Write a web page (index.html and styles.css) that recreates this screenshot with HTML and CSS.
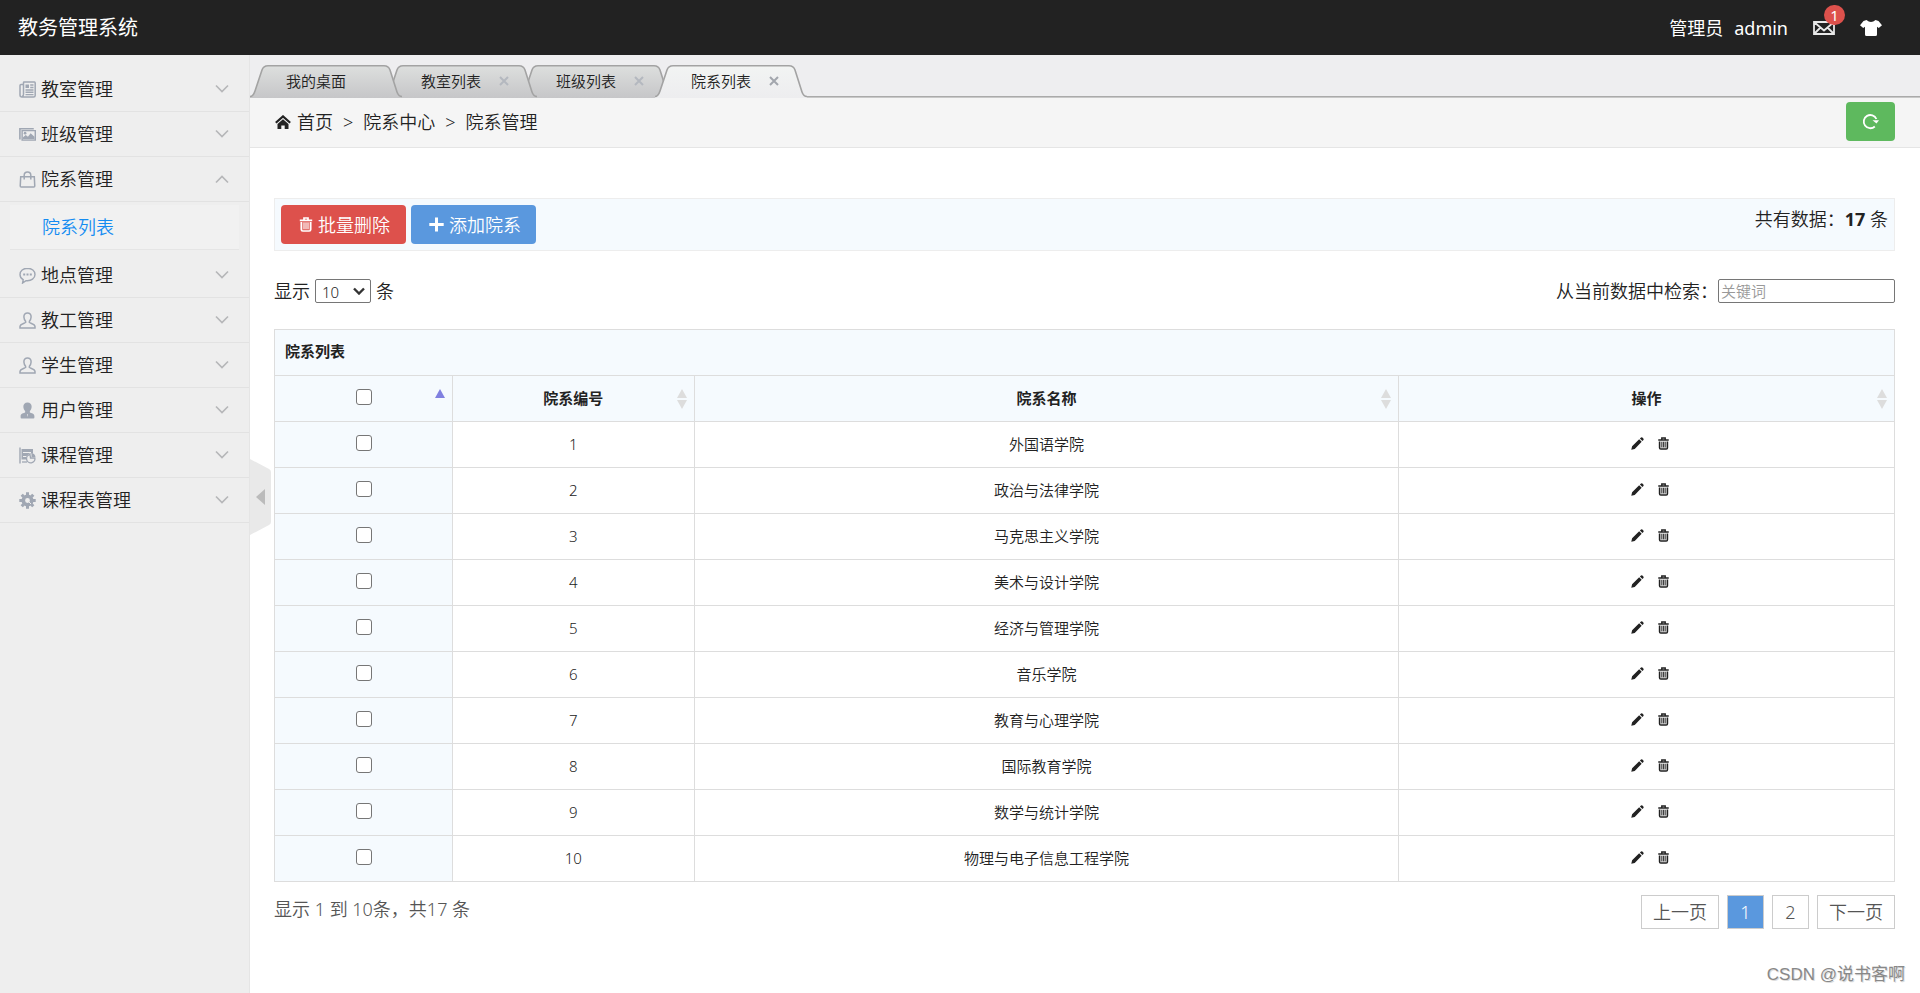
FILE: index.html
```html
<!DOCTYPE html>
<html lang="zh-CN">
<head>
<meta charset="utf-8">
<title>教务管理系统</title>
<link rel="stylesheet" href="styles.css">
</head>
<body>
<svg class="defs" aria-hidden="true">
  <defs>
    <linearGradient id="g-tab" x1="0" y1="0" x2="0" y2="1"><stop offset="0" stop-color="#dddfde"/><stop offset="1" stop-color="#c6c6c8"/></linearGradient>
    <linearGradient id="g-tab-on" x1="0" y1="0" x2="0" y2="1"><stop offset="0" stop-color="#f2f4f3"/><stop offset="1" stop-color="#ededef"/></linearGradient>
    <symbol id="tab-shape" viewBox="0 0 152 33"><path d="M0 31.5C3 31.5 4 29 5 26L12 5C13 2 15 .8 18 .8H134C137 .8 139 2 140 5L147 27C148 30 149 31.5 152 31.5V33H0Z"/></symbol>
    <symbol id="tab-line" viewBox="0 0 152 33"><path d="M0 31.5C3 31.5 4 29 5 26L12 5C13 2 15 .8 18 .8H134C137 .8 139 2 140 5L147 27C148 30 149 31.5 152 31.5" fill="none" stroke-width="1.6"/></symbol>
    <symbol id="i-news" viewBox="0 0 17 17"><path d="M4.500 3V1.500Q4.500 1 5 1H15.500Q16.200 1 16.200 2V14.500Q16.200 16 14.500 16H3Q1 16 1 14V4.500Q1 3.500 2 3.500H4.500V13.500Q4.500 15 3 15.500" fill="none" stroke="currentColor" stroke-width="1.500"/><path d="M6.500 3.500h3.500v3.500h-3.500z" fill="currentColor"/><path d="M11.200 4h3.300M11.200 6.500h3.300M6.500 9h8M6.500 11.300h8M6.500 13.600h8" fill="none" stroke="currentColor" stroke-width="1.400"/></symbol>
    <symbol id="i-pics" viewBox="0 0 19 15"><path d="M1 13V1H16.500" fill="none" stroke="currentColor" stroke-width="1.800"/><path d="M3.500 3.200H18.200V13.800H3.500Z" fill="none" stroke="currentColor" stroke-width="1.600"/><path d="M4.500 12.800V10.500L7.500 8L10 10L13 6L17.300 10V12.800Z" fill="currentColor"/><circle cx="6.800" cy="6" r="1.500" fill="currentColor"/></symbol>
    <symbol id="i-bag" viewBox="0 0 17 18"><path d="M1.300 6H15.700L16.200 16Q16.200 17 15.200 17H1.800Q.8 17 .8 16ZM5 9V4.500Q5 1 8.500 1T12 4.500V9" fill="none" stroke="currentColor" stroke-width="1.600"/></symbol>
    <symbol id="i-chat" viewBox="0 0 17 17"><path d="M8.500 1.200C4.200 1.200 1 4 1 7.400C1 9.700 2.200 11.600 4.200 12.700L3.600 16L7 13.600C12.500 14.200 16 11.200 16 7.400C16 4 12.800 1.200 8.500 1.200Z" fill="none" stroke="currentColor" stroke-width="1.400"/><path d="M4.200 6.500h2v2h-2zM7.500 6.500h2v2h-2zM10.800 6.500h2v2h-2z" fill="currentColor"/></symbol>
    <symbol id="i-person" viewBox="0 0 17 17"><path d="M8.500 1C6.300 1 4.800 2.500 4.900 5C5 7 5.700 8.200 6.600 9.200V10.500C5.500 11.300 1 12 1 14.500V16H16V14.500C16 12 11.500 11.300 10.400 10.500V9.200C11.300 8.200 12 7 12.100 5C12.200 2.500 10.700 1 8.500 1Z" fill="none" stroke="currentColor" stroke-width="1.500"/></symbol>
    <symbol id="i-user" viewBox="0 0 17 18"><path d="M8.500.5C5.800.5 4 2.300 4.100 5C4.200 7 5 8.500 6 9.500V11C4.500 11.600 1.200 12 1.200 15V16.500Q1.200 17.500 2.200 17.500H14.800Q15.800 17.500 15.800 16.500V15C15.800 12 12.500 11.600 11 11V9.500C12 8.500 12.800 7 12.900 5C13 2.300 11.200.5 8.500.5Z" fill="currentColor"/><path d="M8 13h1l-.5 3z" fill="#eee"/></symbol>
    <symbol id="i-plan" viewBox="0 0 17 17"><path d="M1 .5V16.500" stroke="currentColor" stroke-width="1.400"/><path d="M2.500 2H14V6.500H10.500L7 9.500V12.500H2.500Z" fill="currentColor"/><path d="M4 5.500h8M4 9.500h3" stroke="#eee"/><path d="M11 7.500A4.200 4.200 0 1 0 15.900 11H11.500Z" fill="none" stroke="currentColor" stroke-width="1.300"/><path d="M12.500 6V10H16.500Q16 6.500 12.500 6" fill="currentColor"/><path d="M3 15h5" stroke="currentColor" stroke-width="1.300"/></symbol>
    <symbol id="i-gear" viewBox="0 0 17 17"><g fill="none" stroke="currentColor"><circle cx="8.500" cy="8.500" r="4.200" stroke-width="3.600"/><path d="M8.500 .3V3M8.500 14V16.700M.3 8.500H3M14 8.500H16.700M2.700 2.700L4.600 4.600M12.400 12.400L14.300 14.300M14.300 2.700L12.400 4.600M4.600 12.400L2.700 14.300" stroke-width="3"/><path d="M8 8l4 4" stroke="#eee" stroke-width="1"/></g></symbol>
    <symbol id="i-down" viewBox="0 0 14 10"><path d="M1 1.500L7 7.500L13 1.500" fill="none" stroke="currentColor" stroke-width="1.700"/></symbol>
    <symbol id="i-up" viewBox="0 0 14 10"><path d="M1 8.500L7 2.500L13 8.500" fill="none" stroke="currentColor" stroke-width="1.700"/></symbol>
    <symbol id="i-close" viewBox="0 0 10 10"><path d="M1 1L9 9M9 1L1 9" fill="none" stroke="currentColor" stroke-width="2"/></symbol>
    <symbol id="i-home" viewBox="0 0 16 14"><path d="M.8 7.800L8 1.400L15.200 7.800" fill="none" stroke="currentColor" stroke-width="2.200"/><path d="M2.500 9L8 4.200L13.500 9V14H9.700V10.500H6.300V14H2.500Z" fill="currentColor"/></symbol>
    <symbol id="i-refresh" viewBox="0 0 17 17"><path d="M12.800 13.500A6.600 6.600 0 1 1 14.400 6" fill="none" stroke="currentColor" stroke-width="1.800"/><path d="M10.500 7.200H17L14.500 10.500Z" fill="currentColor"/></symbol>
    <symbol id="i-bin" viewBox="0 0 13 15"><path d="M4.500 2.500V1H8.500V2.500M.3 3.300H12.700" fill="none" stroke="currentColor" stroke-width="1.700"/><path d="M1.800 5V12.500Q1.800 14 3.300 14H9.700Q11.200 14 11.200 12.500V5" fill="none" stroke="currentColor" stroke-width="1.700"/><path d="M1.800 5H11.200V13H1.800Z" fill="currentColor" opacity=".2"/><path d="M4.500 5.500V12M6.500 5.500V12M8.500 5.500V12" stroke="currentColor"/></symbol>
    <symbol id="i-plus" viewBox="0 0 15 15"><path d="M7.500 .5V14.500M.3 7.500H14.700" stroke="currentColor" stroke-width="3"/></symbol>
    <symbol id="i-pencil" viewBox="0 0 14 14"><path d="M.3 13.700L1.200 10L8.800 2.500L11.500 5.200L4 12.800ZM9.600 1.700L10.800.6Q11.700 0 12.600.8L13.300 1.500Q14 2.300 13.400 3.200L12.300 4.400Z" fill="currentColor"/></symbol>
    <symbol id="i-mail" viewBox="0 0 22 14"><path d="M1 1H21V13H1ZM1 1L11 9.500L21 1M1 13L7.500 6.500M21 13L14.500 6.500" fill="none" stroke="currentColor" stroke-width="1.800"/></symbol>
    <symbol id="i-shirt" viewBox="0 0 22 16"><path d="M6.500 0Q11 3.800 15.500 0L18.500 1L22 5.300L18.800 8L17 6.700V14.500Q17 16 15.500 16H6.500Q5 16 5 14.500V6.700L3.200 8L0 5.300L3.500 1Z" fill="currentColor"/></symbol>
    <symbol id="i-sort" viewBox="0 0 10 20"><path d="M5 0L10 9H0ZM5 20L10 11H0Z" fill="currentColor"/></symbol>
    <symbol id="i-asc" viewBox="0 0 10 20"><path d="M5 0L10 9H0Z" fill="currentColor"/></symbol>
  </defs>
</svg>

<header class="topbar">
  <h1 class="brand">教务管理系统</h1>
  <div class="account">
    <span>管理员</span>
    <a class="user" href="#">admin</a>
    <a class="mail" href="#" aria-label="消息"><svg class="ic-wide"><use href="#i-mail"/></svg><span class="badge">1</span></a>
    <a class="skin" href="#" aria-label="换肤"><svg class="ic-shirt"><use href="#i-shirt"/></svg></a>
  </div>
</header>

<div class="shell">
  <nav class="side">
    <button class="item"><svg class="ic"><use href="#i-news"/></svg>教室管理<svg class="chev"><use href="#i-down"/></svg></button>
    <button class="item"><svg class="ic"><use href="#i-pics"/></svg>班级管理<svg class="chev"><use href="#i-down"/></svg></button>
    <button class="item"><svg class="ic"><use href="#i-bag"/></svg>院系管理<svg class="chev"><use href="#i-up"/></svg></button>
    <div class="sub"><a href="#">院系列表</a></div>
    <button class="item"><svg class="ic"><use href="#i-chat"/></svg>地点管理<svg class="chev"><use href="#i-down"/></svg></button>
    <button class="item"><svg class="ic"><use href="#i-person"/></svg>教工管理<svg class="chev"><use href="#i-down"/></svg></button>
    <button class="item"><svg class="ic"><use href="#i-person"/></svg>学生管理<svg class="chev"><use href="#i-down"/></svg></button>
    <button class="item"><svg class="ic"><use href="#i-user"/></svg>用户管理<svg class="chev"><use href="#i-down"/></svg></button>
    <button class="item"><svg class="ic"><use href="#i-plan"/></svg>课程管理<svg class="chev"><use href="#i-down"/></svg></button>
    <button class="item"><svg class="ic"><use href="#i-gear"/></svg>课程表管理<svg class="chev"><use href="#i-down"/></svg></button>
  </nav>

  <main class="main">
    <button class="fold" aria-label="收起菜单"><svg viewBox="0 0 21 76"><path d="M0 0L19 10Q21 11 21 13V63Q21 65 19 66L0 76Z" fill="#e9e9e9"/><path d="M6 38L15 30V46Z" fill="#bbb"/></svg></button>

    <div class="tabs">
      <div class="tab t1"><svg class="shape"><use href="#tab-shape"/><use class="line" href="#tab-line"/></svg><span>我的桌面</span></div>
      <div class="tab t2"><svg class="shape"><use href="#tab-shape"/><use class="line" href="#tab-line"/></svg><span>教室列表</span><button class="x" aria-label="关闭"><svg><use href="#i-close"/></svg></button></div>
      <div class="tab t3"><svg class="shape"><use href="#tab-shape"/><use class="line" href="#tab-line"/></svg><span>班级列表</span><button class="x" aria-label="关闭"><svg><use href="#i-close"/></svg></button></div>
      <div class="tab on"><svg class="shape"><use href="#tab-shape"/><use class="line" href="#tab-line"/></svg><span>院系列表</span><button class="x" aria-label="关闭"><svg><use href="#i-close"/></svg></button></div>
    </div>

    <div class="crumbs">
      <svg class="home"><use href="#i-home"/></svg><span>首页</span><span class="gt">&gt;</span><span>院系中心</span><span class="gt">&gt;</span><span>院系管理</span>
      <button class="btn green" aria-label="刷新"><svg class="ic"><use href="#i-refresh"/></svg></button>
    </div>

    <div class="page">
      <div class="tools">
        <button class="btn red"><svg class="bin"><use href="#i-bin"/></svg>批量删除</button>
        <button class="btn blue"><svg class="plus"><use href="#i-plus"/></svg>添加院系</button>
        <span class="total">共有数据：<strong>17</strong> 条</span>
      </div>

      <div class="filters">
        <div class="show"><label for="size">显示</label><span class="pick"><select id="size"><option>10</option><option>25</option><option>50</option></select><svg viewBox="0 0 12 8"><path d="M1 1.500L6 6.500L11 1.500" fill="none" stroke="#333" stroke-width="2.400"/></svg></span><span>条</span></div>
        <label class="search">从当前数据中检索：<input type="text" placeholder="关键词"></label>
      </div>

      <table class="grid">
        <colgroup><col class="c1"><col class="c2"><col class="c3"><col></colgroup>
        <thead>
          <tr><th class="cap" colspan="4">院系列表</th></tr>
          <tr>
            <th><input type="checkbox" aria-label="全选"><svg class="sort asc"><use href="#i-asc"/></svg></th>
            <th>院系编号<svg class="sort"><use href="#i-sort"/></svg></th>
            <th>院系名称<svg class="sort"><use href="#i-sort"/></svg></th>
            <th>操作<svg class="sort"><use href="#i-sort"/></svg></th>
          </tr>
        </thead>
        <tbody>
          <tr><td><input type="checkbox" aria-label="选择1"></td><td>1</td><td>外国语学院</td><td><div class="ops"><a href="#" aria-label="编辑"><svg class="pen"><use href="#i-pencil"/></svg></a><a href="#" aria-label="删除"><svg class="del"><use href="#i-bin"/></svg></a></div></td></tr>
          <tr><td><input type="checkbox" aria-label="选择2"></td><td>2</td><td>政治与法律学院</td><td><div class="ops"><a href="#" aria-label="编辑"><svg class="pen"><use href="#i-pencil"/></svg></a><a href="#" aria-label="删除"><svg class="del"><use href="#i-bin"/></svg></a></div></td></tr>
          <tr><td><input type="checkbox" aria-label="选择3"></td><td>3</td><td>马克思主义学院</td><td><div class="ops"><a href="#" aria-label="编辑"><svg class="pen"><use href="#i-pencil"/></svg></a><a href="#" aria-label="删除"><svg class="del"><use href="#i-bin"/></svg></a></div></td></tr>
          <tr><td><input type="checkbox" aria-label="选择4"></td><td>4</td><td>美术与设计学院</td><td><div class="ops"><a href="#" aria-label="编辑"><svg class="pen"><use href="#i-pencil"/></svg></a><a href="#" aria-label="删除"><svg class="del"><use href="#i-bin"/></svg></a></div></td></tr>
          <tr><td><input type="checkbox" aria-label="选择5"></td><td>5</td><td>经济与管理学院</td><td><div class="ops"><a href="#" aria-label="编辑"><svg class="pen"><use href="#i-pencil"/></svg></a><a href="#" aria-label="删除"><svg class="del"><use href="#i-bin"/></svg></a></div></td></tr>
          <tr><td><input type="checkbox" aria-label="选择6"></td><td>6</td><td>音乐学院</td><td><div class="ops"><a href="#" aria-label="编辑"><svg class="pen"><use href="#i-pencil"/></svg></a><a href="#" aria-label="删除"><svg class="del"><use href="#i-bin"/></svg></a></div></td></tr>
          <tr><td><input type="checkbox" aria-label="选择7"></td><td>7</td><td>教育与心理学院</td><td><div class="ops"><a href="#" aria-label="编辑"><svg class="pen"><use href="#i-pencil"/></svg></a><a href="#" aria-label="删除"><svg class="del"><use href="#i-bin"/></svg></a></div></td></tr>
          <tr><td><input type="checkbox" aria-label="选择8"></td><td>8</td><td>国际教育学院</td><td><div class="ops"><a href="#" aria-label="编辑"><svg class="pen"><use href="#i-pencil"/></svg></a><a href="#" aria-label="删除"><svg class="del"><use href="#i-bin"/></svg></a></div></td></tr>
          <tr><td><input type="checkbox" aria-label="选择9"></td><td>9</td><td>数学与统计学院</td><td><div class="ops"><a href="#" aria-label="编辑"><svg class="pen"><use href="#i-pencil"/></svg></a><a href="#" aria-label="删除"><svg class="del"><use href="#i-bin"/></svg></a></div></td></tr>
          <tr><td><input type="checkbox" aria-label="选择10"></td><td>10</td><td>物理与电子信息工程学院</td><td><div class="ops"><a href="#" aria-label="编辑"><svg class="pen"><use href="#i-pencil"/></svg></a><a href="#" aria-label="删除"><svg class="del"><use href="#i-bin"/></svg></a></div></td></tr>
        </tbody>
      </table>

      <div class="foot">
        <span>显示 1 到 10条，共17 条</span>
        <div class="pager"><a href="#">上一页</a><a class="cur" href="#">1</a><a href="#">2</a><a href="#">下一页</a></div>
      </div>
    </div>
    <div class="mark">CSDN @说书客啊</div>
  </main>
</div>
</body>
</html>
```

FILE: styles.css
```css
* { box-sizing: border-box; }

body {
  margin: 0;
  min-height: 100vh;
  display: flex;
  flex-direction: column;
  background: #fff;
  color: #222;
  font: 350 18px/24px "Noto Sans", "Noto Sans CJK SC", sans-serif;
}

a { color: inherit; text-decoration: none; }
button, input, select { font: inherit; color: inherit; }
button { border: 0; padding: 0; background: none; cursor: pointer; }
strong { font-weight: 700; }
svg { display: block; flex: none; }
.defs { position: absolute; width: 0; height: 0; }

/* top bar */
.topbar {
  display: flex;
  align-items: center;
  justify-content: space-between;
  height: 55px;
  padding: 0 38px 0 18px;
  background: #222;
  color: #fff;
  font-weight: 400;
}
.brand { margin: 0; font-size: 20px; font-weight: 400; }
.account { display: flex; align-items: center; }
.user { margin-left: 11px; }
.mail { position: relative; margin-left: 25px; }
.skin { margin-left: 25px; }
.ic-wide { width: 22px; height: 14px; color: #e8e8e8; }
.ic-shirt { width: 22px; height: 16px; }
.badge {
  position: absolute;
  left: 11px;
  top: -16px;
  width: 21px;
  height: 20px;
  border-radius: 10px;
  background: #dd514c;
  font-size: 15px;
  line-height: 20px;
  text-align: center;
}

.shell { flex: 1; display: flex; }

/* side menu */
.side {
  flex: none;
  width: 250px;
  padding-top: 12px;
  background: #eee;
  border-right: 1px solid #e5e5e5;
}
.item {
  display: flex;
  align-items: center;
  gap: 5px;
  width: 100%;
  height: 45px;
  padding: 0 20px 0 19px;
  border-bottom: 1px solid #e2e2e2;
}
.ic { width: 17px; height: 17px; }
.item .ic { color: #a0a7b3; }
.chev { width: 14px; height: 10px; margin-left: auto; color: #b6b7b9; }
.sub { padding: 3px 10px 3px; }
.sub a {
  display: block;
  padding: 10px 32px;
  border-bottom: 1px solid #e5e5e5;
  background: #f1f1f1;
  color: #148cf1;
}

/* main column */
.main { position: relative; flex: 1; min-width: 0; }
.fold { position: absolute; left: 0; top: 404px; }
.fold svg { width: 21px; height: 76px; }

.tabs {
  display: flex;
  height: 43px;
  padding-top: 10px;
  background: #eeeef0;
  box-shadow: inset 0 -1px #c8c8c8, inset 0 -2px #aaa;
}
.tab {
  position: relative;
  display: flex;
  align-items: center;
  justify-content: space-between;
  width: 152px;
  height: 33px;
  margin-right: -17px;
  padding: 0 28px 2px 36px;
  font-size: 15px;
}
.tab > span, .x { position: relative; }
.t1 { z-index: 3; }
.t2 { z-index: 2; }
.t3 { z-index: 1; }
.on { z-index: 4; }
.shape { position: absolute; inset: 0; width: 100%; height: 100%; fill: url(#g-tab); }
.on .shape { fill: url(#g-tab-on); }
.line { stroke: #a3a3a3; }
.x { color: #b4b8bf; }
.on .x { color: #a2a6ad; }
.x svg { width: 10px; height: 10px; }

.crumbs {
  display: flex;
  align-items: center;
  height: 50px;
  padding: 0 25px 2px;
  background: #f5f5f5;
  border-bottom: 1px solid #e5e5e5;
}
.home { width: 16px; height: 14px; margin-right: 6px; }
.gt { margin: 0 10px; }

.btn {
  display: flex;
  align-items: center;
  gap: 5px;
  height: 39px;
  padding: 0 16px;
  border-radius: 4px;
  color: #fff;
}
.green { margin-left: auto; background: #5eb95e; }
.red { padding: 0 16px 0 18px; background: #dd514c; }
.blue { padding: 0 15px 0 18px; background: #5a98de; }
.bin { width: 14px; height: 15px; }
.plus { width: 15px; height: 15px; }

.page { padding: 50px 25px 0 24px; }
.tools {
  display: flex;
  gap: 5px;
  padding: 6px;
  border: 1px solid #ededed;
  background: #f5fafe;
}
.total { margin-left: auto; padding-top: 2px; }

.filters {
  display: flex;
  align-items: center;
  justify-content: space-between;
  margin: 28px 0 26px;
}
.show { display: flex; align-items: center; gap: 5px; }
.pick { position: relative; font-size: 15px; }
.pick select {
  display: block;
  width: 56px;
  height: 24px;
  padding: 0 6px;
  border: 1px solid #767676;
  border-radius: 2px;
  background: #fff;
  appearance: none;
}
.pick svg { position: absolute; right: 6px; top: 8px; width: 12px; height: 8px; pointer-events: none; }
.search { display: flex; align-items: center; }
.search input {
  width: 177px;
  height: 24px;
  padding: 0 2px;
  border: 1px solid #767676;
  border-radius: 2px;
  font-size: 15px;
}
.search input::placeholder { color: #999; }

/* table */
.grid {
  width: 100%;
  border-collapse: collapse;
  table-layout: fixed;
  font-size: 15px;
}
.c1 { width: 11%; }
.c2 { width: 14.9%; }
.c3 { width: 43.5%; }
.grid th, .grid td {
  position: relative;
  height: 46px;
  padding: 0 10px 2px;
  border: 1px solid #ddd;
  text-align: center;
}
.grid th, .grid td:first-child { background: #f5fafe; }
.grid td:first-child, .grid th:first-child { padding-bottom: 3px; }
.grid .cap { text-align: left; }
.grid input {
  display: block;
  width: 16px;
  height: 16px;
  margin: 0 auto;
  border: 1px solid #767676;
  border-radius: 3px;
  background: #fff;
  appearance: none;
}
.sort { position: absolute; right: 7px; top: 13px; width: 10px; height: 20px; color: #ddd; }
.asc { color: #8080e0; }
.ops { display: flex; align-items: center; justify-content: center; gap: 14px; padding-left: 6px; }
.pen { width: 13px; height: 13px; }
.del { width: 11px; height: 13px; }

.foot {
  display: flex;
  justify-content: space-between;
  padding-top: 13px;
  color: #555;
}
.foot > span { padding-top: 2px; }
.pager { display: flex; gap: 8px; }
.pager a {
  min-width: 37px;
  padding: 4px 11px;
  border: 1px solid #ccc;
  text-align: center;
}
.pager .cur { background: #5a98de; color: #fff; }

.mark {
  position: absolute;
  right: 15px;
  bottom: 6px;
  color: #888;
  font-family: "Liberation Sans", "Noto Sans CJK SC", sans-serif;
  font-weight: 400;
  font-size: 17px;
  text-shadow: 1px 1px #ddd;
}
```
